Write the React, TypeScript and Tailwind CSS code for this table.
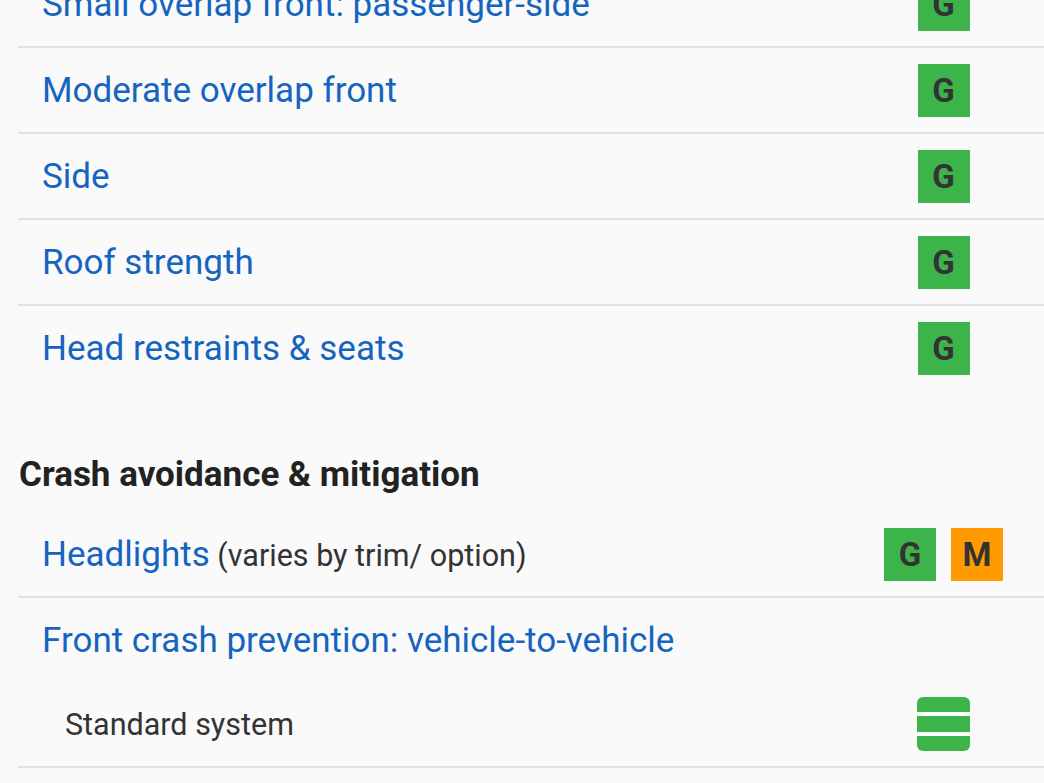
import React from "react";

const font = { fontFamily: "Roboto, 'Noto Sans', Arial, sans-serif" };

function Badge({ letter, color }: { letter: string; color: "g" | "m" }) {
  return (
    <div
      className={
        "w-[52px] h-[53px] flex items-center justify-center text-[33px] font-bold text-[#333333] leading-none " +
        (color === "g" ? "bg-[#3cb44a]" : "bg-[#ff9a00]")
      }
    >
      {letter}
    </div>
  );
}

function StackIcon() {
  return (
    <div className="w-[53px] h-[54px] flex flex-col gap-[4px]">
      <div className="flex-1 bg-[#3cb44a] rounded-t-[6px]" />
      <div className="flex-1 bg-[#3cb44a]" />
      <div className="flex-1 bg-[#3cb44a] rounded-b-[6px]" />
    </div>
  );
}

function Row({
  children,
  rating,
  border = true,
}: {
  children: React.ReactNode;
  rating?: React.ReactNode;
  border?: boolean;
}) {
  return (
    <div
      className={
        "flex items-center " +
        (border ? "h-[86px] border-b-2 border-[#e0e0e0]" : "h-[84px]")
      }
    >
      <div className="flex-1 pl-[24px] pt-[2px] whitespace-nowrap">{children}</div>
      <div className="w-[201px] flex justify-center gap-[15px]">{rating}</div>
    </div>
  );
}

const link = "text-[35px] text-[#1565c0]";

export default function App() {
  return (
    <div className="w-[1044px] h-[783px] overflow-hidden bg-[#fafafa]" style={font}>
      <div className="pl-[18px] mt-[-38px]">
        <Row rating={<Badge letter="G" color="g" />}>
          <span className={link}>Small overlap front: passenger-side</span>
        </Row>
        <Row rating={<Badge letter="G" color="g" />}>
          <span className={link}>Moderate overlap front</span>
        </Row>
        <Row rating={<Badge letter="G" color="g" />}>
          <span className={link}>Side</span>
        </Row>
        <Row rating={<Badge letter="G" color="g" />}>
          <span className={link}>Roof strength</span>
        </Row>
        <Row border={false} rating={<Badge letter="G" color="g" />}>
          <span className={link}>Head restraints &amp; seats</span>
        </Row>
        <h2 className="mt-[65px] mb-[17px] text-[35px] font-bold text-[#222222] leading-[40px] pl-[1px]">
          Crash avoidance &amp; mitigation
        </h2>
        <Row
          rating={
            <>
              <Badge letter="G" color="g" />
              <Badge letter="M" color="m" />
            </>
          }
        >
          <span className={link}>Headlights</span>
          <span className="text-[30.5px] text-[#333333]"> (varies by trim/ option)</span>
        </Row>
        <Row border={false}>
          <span className={link}>Front crash prevention: vehicle-to-vehicle</span>
        </Row>
        <Row rating={<StackIcon />}>
          <span className="pl-[23px] text-[30.5px] text-[#333333]">Standard system</span>
        </Row>
      </div>
    </div>
  );
}
